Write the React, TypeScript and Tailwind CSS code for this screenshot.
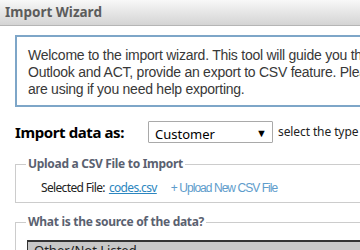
import React, { useState } from 'react';

const sourceOptions = ['Other/Not Listed', 'Outlook', 'ACT!', 'QuickBooks'];

const ImportWizard: React.FC = () => {
  const [importAs, setImportAs] = useState('Customer');
  const [source, setSource] = useState(sourceOptions[0]);

  return (
    <div className="w-[360px] h-[250px] overflow-hidden bg-white font-['Liberation_Sans',Arial,sans-serif]">
      <div className="h-[26px] flex items-center px-[5px] border-b border-[#b5b5b5] bg-gradient-to-b from-[#f8f8f8] to-[#d4d4d4]">
        <h1 className="text-[13.5px] font-bold text-[#5c5c5c] font-['Noto_Sans',sans-serif]">
          Import Wizard
        </h1>
      </div>

      <div className="w-[640px] pl-[15px] pt-[9px]">
        <div className="border-2 border-[#7ea6c8] pl-[11px] pt-[10px] pb-[7px] text-[14px] leading-[17px] text-[#383838] whitespace-nowrap tracking-[-0.25px]">
          Welcome to the import wizard. This tool will guide you through the process of importing your data.
          <br />
          Outlook and ACT, provide an export to CSV feature. Please consult the documentation for the program you
          <br />
          are using if you need help exporting.
        </div>

        <div className="flex items-center mt-[14px] h-[22px]">
          <label className="w-[133px] text-[15px] font-bold text-black font-['Noto_Sans',sans-serif] tracking-[-0.4px]">
            Import data as:
          </label>
          <div className="relative w-[125px] h-[22px] border border-[#a9a9a9] rounded-[1px] bg-white">
            <select
              value={importAs}
              onChange={(e) => setImportAs(e.target.value)}
              className="appearance-none w-full h-full pl-[6px] text-[13px] text-black bg-transparent outline-none font-['Noto_Sans',sans-serif]"
            >
              <option>Customer</option>
              <option>Vendor</option>
              <option>Item</option>
            </select>
            <span className="pointer-events-none absolute right-[5px] top-[3px] text-[11px] text-black">▼</span>
          </div>
          <span className="ml-[5px] text-[12px] text-[#222] font-['Noto_Sans',sans-serif] tracking-[-0.1px]">
            select the type of data you are importing
          </span>
        </div>

        <fieldset className="mt-[12px] h-[48px] border border-[#cccccc]">
          <legend className="ml-[10px] px-[2px] text-[12px] font-bold text-[#5a6170] font-['Noto_Sans',sans-serif] tracking-[-0.3px]">
            Upload a CSV File to Import
          </legend>
          <div className="flex items-center pl-[25px] pt-[6px] text-[12px] tracking-[-0.65px] font-['Noto_Sans',sans-serif]">
            <span className="text-[#222]">Selected File:</span>
            <a href="#" className="ml-[4px] text-[#2b86c0] underline">codes.csv</a>
            <a href="#" className="ml-[14px] text-[12px] text-[#5e9ccb] tracking-[-0.95px] font-['Liberation_Sans',Arial,sans-serif]">
              + Upload New CSV File
            </a>
          </div>
        </fieldset>

        <fieldset className="mt-[10px] h-[80px] border border-[#cccccc]">
          <legend className="ml-[10px] px-[2px] text-[12px] font-bold text-[#5a6170] font-['Noto_Sans',sans-serif] tracking-[-0.3px]">
            What is the source of the data?
          </legend>
          <div className="ml-[11px] mt-[9px] border-t-2 border-l border-[#333] bg-[#c8c8c8]">
            {sourceOptions.map((o) => (
              <div
                key={o}
                onClick={() => setSource(o)}
                className={`px-[6px] text-[13px] leading-[17px] text-[#222] font-['Noto_Sans',sans-serif] ${o === source ? 'bg-[#c8c8c8]' : 'bg-white'}`}
              >
                {o}
              </div>
            ))}
          </div>
        </fieldset>
      </div>
    </div>
  );
};

export default function App() {
  return <ImportWizard />;
}
